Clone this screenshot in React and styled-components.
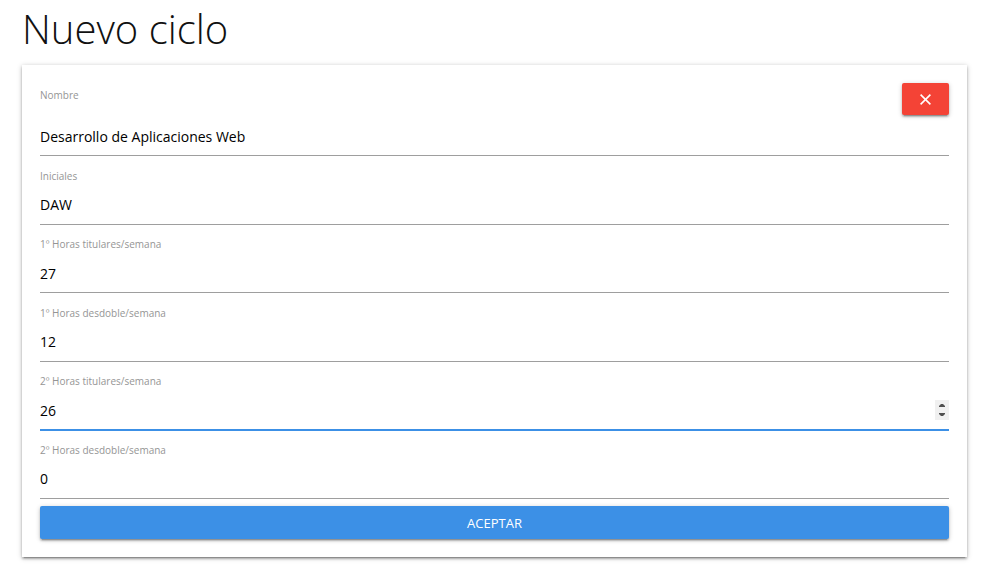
import React from "react";
import styled, { createGlobalStyle } from "styled-components";

const GlobalStyle = createGlobalStyle`
  * { box-sizing: border-box; }
  body {
    margin: 0;
    background: #fff;
    font-family: "Segoe UI", "Open Sans", "Noto Sans", sans-serif;
  }
`;

const Page = styled.main`
  padding: 4px 16px 12px 22px;
`;

const Title = styled.h1`
  margin: 0 0 11px;
  font-size: 40px;
  line-height: 50px;
  font-weight: 300;
  color: #111;
`;

const Card = styled.form`
  padding: 18px;
  background: #fff;
  box-shadow: 0 2px 2px 0 rgba(0, 0, 0, 0.2), 0 3px 1px -2px rgba(0, 0, 0, 0.2),
    0 1px 5px 0 rgba(0, 0, 0, 0.26);
`;

const Header = styled.div`
  display: flex;
  justify-content: space-between;
  align-items: flex-start;
`;

const Label = styled.label`
  display: block;
  font-size: 10px;
  line-height: 16px;
  color: #959595;
`;

const HeaderLabel = styled(Label)`
  padding-top: 4px;
`;

const Button = styled.button`
  display: flex;
  align-items: center;
  justify-content: center;
  height: 33px;
  padding: 0 16px;
  border: 0;
  border-radius: 2px;
  color: #fff;
  font-family: inherit;
  font-size: 13px;
  text-transform: uppercase;
  cursor: pointer;
  box-shadow: 0 2px 2px 0 rgba(0, 0, 0, 0.2), 0 3px 1px -2px rgba(0, 0, 0, 0.2),
    0 1px 5px 0 rgba(0, 0, 0, 0.2);
`;

const CloseButton = styled(Button)`
  width: 47px;
  height: 32px;
  padding: 0;
  background: #f44336;
`;

const SubmitButton = styled(Button)`
  width: 100%;
  margin-top: 7px;
  background: #3c90e6;
`;

const spinnerArrows = `url("data:image/svg+xml,%3Csvg xmlns='http://www.w3.org/2000/svg' width='14' height='20'%3E%3Cpath fill='%234f4f4f' d='M4 7V6l2-2h2l2 2v1zM4 13v1l2 2h2l2-2v-1z'/%3E%3C/svg%3E")`;

const Input = styled.input`
  display: block;
  width: 100%;
  height: 41px;
  padding: 2px 0 0;
  border: 0;
  border-bottom: 1px solid ${(p) => (p.$active ? "#3c90e6" : "#9e9e9e")};
  border-radius: 0;
  outline: 0;
  background: transparent;
  box-shadow: ${(p) => (p.$active ? "0 1px 0 0 #3c90e6" : "none")};
  color: #000;
  font-family: inherit;
  font-size: 14px;

  &::-webkit-inner-spin-button {
    appearance: none;
    width: 14px;
    height: 20px;
    background: #f0f0f0 ${spinnerArrows} no-repeat center;
    opacity: ${(p) => (p.$active ? 1 : 0)};
  }
`;

const Fields = styled.div`
  display: grid;
  grid-auto-rows: 1fr;
  min-height: 343px;
`;

const Field = styled.div`
  display: flex;
  flex-direction: column;
  justify-content: flex-end;
`;

const fields = [
  { id: "iniciales", label: "Iniciales", type: "text", value: "DAW" },
  { id: "titulares1", label: "1º Horas titulares/semana", type: "number", value: "27" },
  { id: "desdoble1", label: "1º Horas desdoble/semana", type: "number", value: "12" },
  { id: "titulares2", label: "2º Horas titulares/semana", type: "number", value: "26", active: true },
  { id: "desdoble2", label: "2º Horas desdoble/semana", type: "number", value: "0" },
];

export default function App() {
  return (
    <>
      <GlobalStyle />
      <Page>
        <Title>Nuevo ciclo</Title>
        <Card onSubmit={(e) => e.preventDefault()}>
          <Header>
            <HeaderLabel htmlFor="nombre">Nombre</HeaderLabel>
            <CloseButton type="button" aria-label="Cerrar">
              <svg width="11" height="11" viewBox="0 0 11 11" fill="none" stroke="#fff" strokeWidth="1.6">
                <path d="M.6.6 10.4 10.4M10.4.6.6 10.4" />
              </svg>
            </CloseButton>
          </Header>
          <Input id="nombre" type="text" defaultValue="Desarrollo de Aplicaciones Web" />
          <Fields>
            {fields.map((f) => (
              <Field key={f.id}>
                <Label htmlFor={f.id}>{f.label}</Label>
                <Input id={f.id} type={f.type} defaultValue={f.value} $active={f.active} />
              </Field>
            ))}
          </Fields>
          <SubmitButton type="submit">Aceptar</SubmitButton>
        </Card>
      </Page>
    </>
  );
}
